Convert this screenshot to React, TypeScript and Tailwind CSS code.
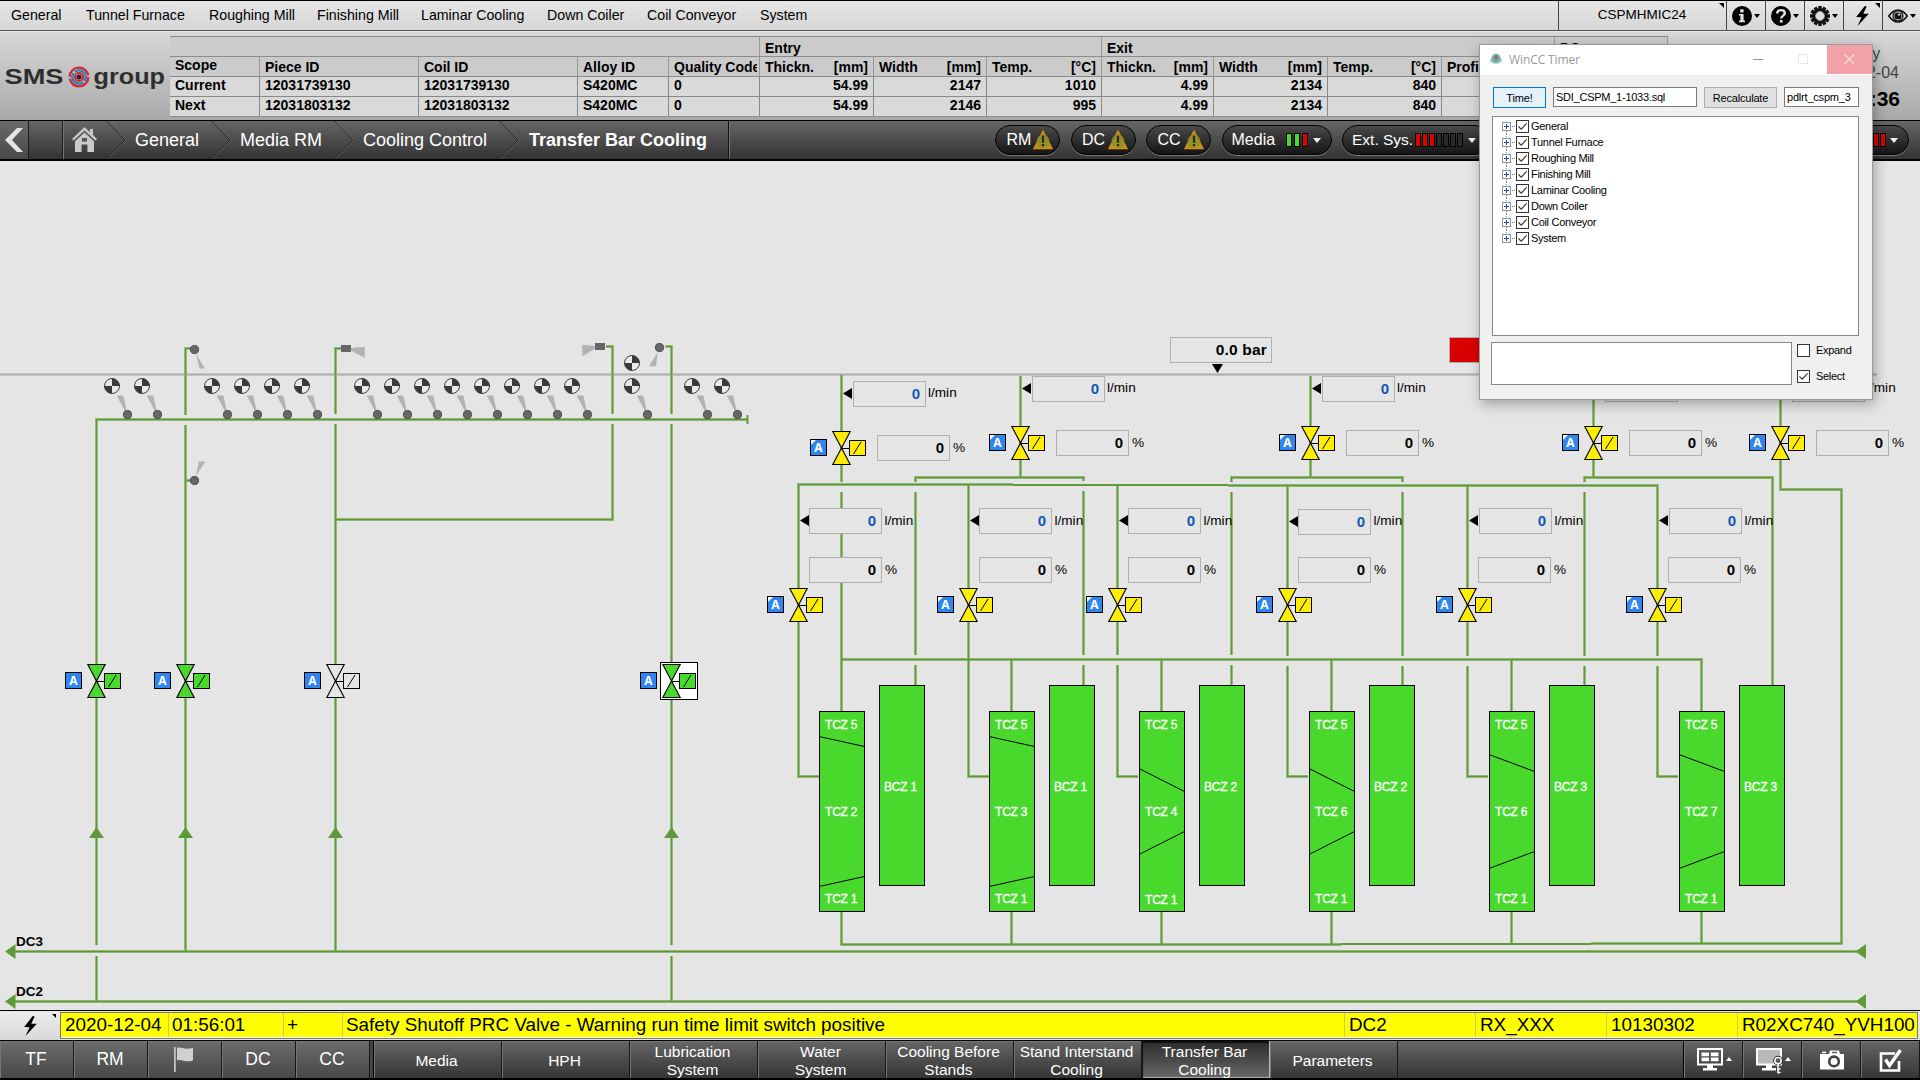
import React from "react";

const SANS = "font-['Liberation_Sans',Arial,sans-serif]";

/* ---------- top menu ---------- */

const menu: [string, string][] = [
  ["General", "w-[75px]"],
  ["Tunnel Furnace", "w-[123px]"],
  ["Roughing Mill", "w-[108px]"],
  ["Finishing Mill", "w-[104px]"],
  ["Laminar Cooling", "w-[126px]"],
  ["Down Coiler", "w-[100px]"],
  ["Coil Conveyor", "w-[113px]"],
  ["System", "w-[80px]"],
];

const Bolt = ({ className = "" }: { className?: string }) => (
  <svg className={className} width="16" height="22" viewBox="0 0 16 22">
    <path d="M10.5 0 L1 12 L7 12.3 L2.5 22 L15 8.6 L8.8 8.4 L12.6 0.6 Z" fill="#000" />
  </svg>
);

const SmallDown = () => (
  <svg width="6" height="4" viewBox="0 0 6 4" className="shrink-0">
    <path d="M0 0H6L3 4Z" fill="#000" />
  </svg>
);

const Corner = () => (
  <svg width="5" height="5" viewBox="0 0 5 5" className="absolute right-[2px] top-[2px]">
    <path d="M0 0H5V5Z" fill="#000" />
  </svg>
);

const InfoIcon = () => (
  <svg width="20" height="20" viewBox="0 0 20 20">
    <circle cx="10" cy="10" r="10" fill="#000" />
    <rect x="8.2" y="3.3" width="3.4" height="3.2" fill="#e2e2e2" />
    <path d="M7 8H11.6V14.6H13V16.2H7V14.6H8.4V9.6H7Z" fill="#e2e2e2" />
  </svg>
);

const HelpIcon = () => (
  <svg width="20" height="20" viewBox="0 0 20 20">
    <circle cx="10" cy="10" r="10" fill="#000" />
    <path d="M6.2 7.6C6.2 5 8 4.1 10 4.1S13.8 5.2 13.8 7.3C13.8 9.6 10.2 9.7 10.2 12.6" fill="none" stroke="#e2e2e2" strokeWidth="2.4" />
    <rect x="8.9" y="14" width="2.7" height="2.6" fill="#e2e2e2" />
  </svg>
);

const GearIcon = () => (
  <svg width="20" height="20" viewBox="0 0 20 20">
    {[0, 30, 60, 90, 120, 150].map((a) => (
      <rect key={a} x="8.3" y="0" width="3.4" height="20" fill="#111" transform={`rotate(${a} 10 10)`} />
    ))}
    <circle cx="10" cy="10" r="7.8" fill="#111" />
    <circle cx="10" cy="10" r="4.4" fill="#e0e0e0" />
    <circle cx="10" cy="10" r="4.6" fill="none" stroke="#888" strokeWidth="1" />
  </svg>
);

const EyeIcon = () => (
  <svg width="20" height="16" viewBox="0 0 20 16">
    <path d="M0.8 8C4 3.4 7 2 10 2S16 3.4 19.2 8C16 12.6 13 14 10 14S4 12.6 0.8 8Z" fill="none" stroke="#111" strokeWidth="1.6" />
    <circle cx="10" cy="8" r="5" fill="none" stroke="#111" strokeWidth="1.2" />
    <circle cx="10" cy="8" r="3.6" fill="#111" />
    <circle cx="11" cy="6.6" r="1.2" fill="#ccc" />
  </svg>
);

const TopBar = () => (
  <div className="flex h-[31px] shrink-0 border-t border-black border-b border-b-[#555] bg-linear-to-b from-[#e6e6e6] to-[#d6d6d6] pl-[11px]">
    {menu.map(([t, w]) => (
      <div key={t} className={`${w} shrink-0 whitespace-nowrap pt-[1px] text-[14.2px] leading-[27px]`}>{t}</div>
    ))}
    <div className="ml-auto flex w-[362px] shrink-0">
      <div className="relative w-[168px] border-l border-[#444] pr-[1px] text-center text-[13.5px] leading-[28px]">
        CSPMHMIC24
        <Corner />
      </div>
      <div className="flex w-[39px] items-center gap-[2px] border-l border-[#444] pl-[4.5px]"><InfoIcon /><SmallDown /></div>
      <div className="flex w-[39px] items-center gap-[2px] border-l border-[#444] pl-[5px]"><HelpIcon /><SmallDown /></div>
      <div className="flex w-[39px] items-center gap-[2px] border-l border-[#444] pl-[5px]"><GearIcon /><SmallDown /></div>
      <div className="relative flex w-[39px] items-center justify-center border-l border-[#444] pr-[2px]"><Bolt className="h-[20px] w-[15px]" /><Corner /></div>
      <div className="flex w-[38px] items-center gap-[2px] border-l border-[#444] pl-[4.5px]"><EyeIcon /><SmallDown /></div>
    </div>
  </div>
);

/* ---------- header with strip data ---------- */

const Logo = () => (
  <svg width="170" height="40" viewBox="0 0 170 40" className="mt-[25px] shrink-0" fontFamily="Liberation Sans, Arial, sans-serif" fontWeight="bold" fill="#2e2e30">
    <text x="4.5" y="26.5" fontSize="21.5" textLength="59" lengthAdjust="spacingAndGlyphs">SMS</text>
    <g fill="none">
      <circle cx="79" cy="20" r="9.4" stroke="#d22630" strokeWidth="2.3" strokeDasharray="27.5 2" />
      <circle cx="79" cy="20" r="6.6" stroke="#2c7fb8" strokeWidth="2.4" strokeDasharray="19 1.7" transform="rotate(50 79 20)" />
      <circle cx="79" cy="20" r="4.1" stroke="#d22630" strokeWidth="2" />
    </g>
    <circle cx="79" cy="20" r="2.6" fill="#3a2024" />
    <text x="93.5" y="26.5" fontSize="21.5" textLength="71.5" lengthAdjust="spacingAndGlyphs">group</text>
  </svg>
);

const cols = "grid-cols-[90px_159px_159px_91px_91px_114px_113px_115px_112px_114px_114px_113px_114px]";

const heads: [string, string][] = [
  ["Scope", ""], ["Piece ID", ""], ["Coil ID", ""], ["Alloy ID", ""], ["Quality Code", ""],
  ["Thickn.", "[mm]"], ["Width", "[mm]"], ["Temp.", "[°C]"],
  ["Thickn.", "[mm]"], ["Width", "[mm]"], ["Temp.", "[°C]"],
  ["Profile", ""], ["", ""],
];

const rows = [
  ["Current", "12031739130", "12031739130", "S420MC", "0", "54.99", "2147", "1010", "4.99", "2134", "840", "", ""],
  ["Next", "12031803132", "12031803132", "S420MC", "0", "54.99", "2146", "995", "4.99", "2134", "840", "", ""],
];

const StripTable = () => (
  <div className="mt-[4px] h-[80px] w-[1498px] shrink-0 border-t border-[#888] text-[14px] font-bold leading-[19px]">
    <div className="flex h-[20px] border-b border-[#8c8c8c] bg-[#cbcbcb]">
      <div className="w-[590px] border-r border-[#999]" />
      <div className="w-[342px] border-r border-[#999] pl-[5px] pt-[2px]">Entry</div>
      <div className="w-[453px] border-r border-[#999] pl-[5px] pt-[2px]">Exit</div>
      <div className="w-[113px] border-r border-[#999] pl-[5px] pt-[2px]">DC</div>
    </div>
    <div className={`grid h-[20px] border-b border-[#888] bg-[#cbcbcb] ${cols}`}>
      {heads.map(([a, b], i) => (
        <div key={i} className={`flex justify-between overflow-hidden whitespace-nowrap border-r border-[#999] pl-[5px] ${i === 4 ? "pr-[2px]" : "pr-[5px]"} ${i === 0 ? "leading-[17px]" : "pt-[1px]"}`}>
          <span className="overflow-hidden">{a}</span>
          <span>{b}</span>
        </div>
      ))}
    </div>
    {rows.map((r, k) => (
      <div key={k} className={`grid h-[20px] border-b border-[#888] bg-[#d9d9d9] ${cols}`}>
        {r.map((v, i) => (
          <div key={i} className={`border-r border-[#888] px-[5px] leading-[17px] ${i > 4 ? "text-right" : ""}`}>{v}</div>
        ))}
      </div>
    ))}
  </div>
);

const Header = () => (
  <div className="flex h-[89px] shrink-0 border-t border-[#e6e6e6] bg-linear-to-b from-[#d8d8d8] to-[#a9a9a9]">
    <Logo />
    <StripTable />
    <div className="ml-auto flex w-[124px] flex-col items-center text-[16px] text-[#444]">
      <div className="mt-[12px] leading-[20px]">Friday</div>
      <div className="leading-[18px]">2020-12-04</div>
      <div className="mt-[5px] text-[21px] font-bold leading-[24px] text-black">01:56:36</div>
    </div>
  </div>
);

/* ---------- breadcrumb bar ---------- */

const Chevron = () => (
  <svg width="20" height="38" viewBox="0 0 20 38" className="shrink-0">
    <path d="M0.5 0L19 19L0.5 38" fill="none" stroke="#242424" strokeWidth="1" />
    <path d="M1.5 0L20 19L1.5 38" fill="none" stroke="#707070" strokeWidth="0.7" />
  </svg>
);

const Warning = () => (
  <svg width="20" height="20" viewBox="0 0 20 20" className="shrink-0">
    <path d="M10 1L19 18.5H1Z" fill="#a29a1c" stroke="#d98a1a" strokeWidth="1.4" />
    <circle cx="10" cy="11" r="6.4" fill="#8d8a2a" opacity=".75" />
    <path d="M10 5.6V12.8" stroke="#2b2b10" strokeWidth="2.2" />
    <rect x="8.9" y="14" width="2.2" height="2.2" fill="#2b2b10" />
  </svg>
);

const Bars = ({ colors, gap = "gap-px" }: { colors: string[]; gap?: string }) => (
  <div className={`flex ${gap}`}>
    {colors.map((c, i) => (
      <div key={i} className={`h-[14px] w-[6px] border border-black ${c}`} />
    ))}
  </div>
);

const WhiteDown = () => (
  <svg width="8" height="5" viewBox="0 0 8 5"><path d="M0 0H8L4 5Z" fill="#eee" /></svg>
);

const pill = "flex h-[30px] items-center rounded-full border border-black bg-linear-to-b from-[#4a4a4a] to-[#161616] text-[16px] leading-[18px] text-white shadow-[0_1px_0_#777]";

const R = "bg-[#dd0000]";
const G = "bg-[#48d92c]";
const E = "bg-[#2a2a2a]";

const NavBar = () => (
  <div className="flex h-[41px] shrink-0 border-y border-b-2 border-black bg-linear-to-b from-[#666] to-[#343434] text-[18px] text-white">
    <div className="flex w-[29px] items-center border-r border-[#1c1c1c] bg-linear-to-b from-[#6a6a6a] to-[#484848] pl-[4px]">
      <svg width="20" height="26" viewBox="0 0 20 26"><path d="M19 1L8 13L19 25H13L1 13L13 1Z" fill="#e4e4e4" /></svg>
    </div>
    <div className="w-[34px] border-r border-[#1c1c1c] shadow-[1px_0_0_#777]" />
    <div className="flex w-[43px] items-center pl-[9px]">
      <svg width="25" height="26" viewBox="0 0 25 26" fill="#c9c9c9">
        <path d="M12.5 0L0 12L1.6 13.6L12.5 3.4L23.4 13.6L25 12L21 8V2H18V5.2Z" />
        <path d="M12.5 5.4L3 14.2V25H9.6V17.5H15.4V25H22V14.2Z" />
        <rect x="10" y="11" width="5" height="3.6" fill="#555" />
      </svg>
    </div>
    <Chevron />
    <div className="w-[85px] pl-[9px] leading-[39px]">General</div>
    <Chevron />
    <div className="w-[103px] pl-[9px] leading-[39px]">Media RM</div>
    <Chevron />
    <div className="w-[145px] whitespace-nowrap pl-[9px] leading-[39px]">Cooling Control</div>
    <Chevron />
    <div className="w-[210px] whitespace-nowrap border-r border-[#111] pl-[10px] font-bold leading-[39px] shadow-[1px_0_0_#777]">Transfer Bar Cooling</div>
    <div className="ml-[266px] flex items-center gap-[10.5px]">
      {["RM", "DC", "CC"].map((t) => (
        <div key={t} className={`${pill} w-[65px] justify-between pl-[10.5px] pr-[6.5px]`}>{t}<Warning /></div>
      ))}
      <div className={`${pill} w-[110px] pl-[9px]`}>
        <span className="w-[54px]">Media</span><Bars colors={[G, G, R]} gap="gap-[2px]" /><span className="ml-[5px]"><WhiteDown /></span>
      </div>
      <div className={`${pill} w-[148px] gap-[5px] pl-[9px]`}>
        <span className="w-[58px] whitespace-nowrap text-[15.5px]">Ext. Sys.</span><Bars colors={[R, R, R, E, E, E, E]} /><WhiteDown />
      </div>
      <div className={`${pill} ml-[236px] w-[172px] justify-end gap-[4px] pr-[10px]`}>
        <Bars colors={[R, R, R, R, R, R]} /><WhiteDown />
      </div>
    </div>
  </div>
);

/* ---------- process diagram ---------- */

const OY = 161;

const pipes = [
  "M96.5 945V419.5H747.5",
  "M96.5 956V1001.5",
  "M191 348.5H185.5V415",
  "M185.5 425V951.5",
  "M185.5 480.5H191",
  "M341 348.5H335.5V414",
  "M335.5 424V951.5",
  "M335.5 519.5H612.5V424",
  "M612.5 414V346.5H606",
  "M665.5 346.5H671.5V414",
  "M671.5 424V945",
  "M671.5 956V1001.5",
  "M15 951.5H1857",
  "M15 1001.5H1857",
  "M841.5 375V482",
  "M841.5 492V711",
  "M1013 484.5H798.5V776.5H819",
  "M1228 485.5H1657.5V656",
  "M968.5 485V776.5H989",
  "M1117.5 485V655",
  "M1117.5 665V776.5H1138",
  "M1287.5 486V656",
  "M1287.5 666V776.5H1308",
  "M1467.5 486V656",
  "M1467.5 666V776.5H1488",
  "M1657.5 666V776.5H1678",
  "M1020.5 376V477.5",
  "M915.5 482V477.5H1083.5V481",
  "M915.5 492V655",
  "M915.5 665V685",
  "M1083.5 491V655",
  "M1083.5 665V685",
  "M1310.5 376V477.5",
  "M1231.5 482V477.5H1402.5V482",
  "M1231.5 492V655",
  "M1231.5 665V685",
  "M1402.5 492V656",
  "M1402.5 666V685",
  "M1593.5 376V477.5",
  "M1584.5 482V477.5H1772.5V685",
  "M1584.5 492V656",
  "M1584.5 666V685",
  "M1780.5 376V489.5H1841.5V943.5H1591",
  "M841.5 659.5H1701.5V711",
  "M1011.5 659.5V711",
  "M1161.5 659.5V711",
  "M1331.5 659.5V711",
  "M1511.5 659.5V711",
  "M841.5 912V944.5H1341",
  "M1011.5 912V944",
  "M1161.5 912V944",
  "M1331.5 912V944",
  "M1511.5 912V944",
  "M1701.5 912V944",
].join("");

const gauges = [112, 142, 212, 242, 272, 302, 362, 392, 422, 452, 482, 512, 542, 572, 632, 692, 722];

const Gauge = ({ x, y }: { x: number; y: number }) => (
  <g transform={`translate(${x} ${y})`}>
    <circle r="7.5" fill="#eaeaea" />
    <path d="M0 0V-7.5A7.5 7.5 0 0 1 7.5 0ZM0 0V7.5A7.5 7.5 0 0 1 -7.5 0Z" fill="#3a3a3a" />
    <circle r="7.5" fill="none" stroke="#3a3a3a" strokeWidth="1" />
  </g>
);

const Dot = ({ x, y }: { x: number; y: number }) => (
  <circle cx={x} cy={y} r="4.1" fill="#666" stroke="#474747" strokeWidth="0.9" />
);

const GREEN = "#48d92c";
const YELLOW = "#ffee00";

const Valve = ({ x, y, fill, corner }: { x: number; y: number; fill: string; corner?: boolean }) => (
  <g transform={`translate(${x} ${y})`} stroke="#000">
    <path d="M-8.7 -16.5H8.7L-8.7 16.5H8.7Z" fill={fill} strokeWidth="1.1" />
    <path d="M0 .5H8" strokeWidth="1" />
    <rect x="8" y="-7.5" width="16" height="15" fill={fill} />
    <path d="M12 6L19.5 -6" strokeWidth="1" />
    <rect x="-31" y="-8.5" width="16" height="16" fill="#2f86ee" />
    {corner && <path d="M-30.5 -8V-3L-25.5 -8Z" fill="#fff" stroke="none" />}
    <text x="-23" y="4.2" fontSize="12" fontWeight="bold" fill="#fff" stroke="none" textAnchor="middle" fontFamily="Open Sans, sans-serif">A</text>
  </g>
);

const valves: { x: number; y: number; fill: string; corner?: boolean }[] = [
  { x: 96.5, y: 681, fill: GREEN },
  { x: 185.5, y: 681, fill: GREEN },
  { x: 335.5, y: 681, fill: "#e5e5e5" },
  { x: 671.5, y: 681, fill: GREEN },
  { x: 841.5, y: 448, fill: YELLOW, corner: true },
  { x: 1020.5, y: 443, fill: YELLOW, corner: true },
  { x: 1310.5, y: 443, fill: YELLOW, corner: true },
  { x: 1593.5, y: 443, fill: YELLOW, corner: true },
  { x: 1780.5, y: 443, fill: YELLOW, corner: true },
  ...[798.5, 968.5, 1117.5, 1287.5, 1467.5, 1657.5].map((x) => ({ x, y: 605, fill: YELLOW, corner: true })),
];

const zones = [
  { x: 819, mid: "TCZ 2", bcz: "BCZ 1", d: [736.5, 746.5, 886.5, 876.5], low: 903 },
  { x: 989, mid: "TCZ 3", bcz: "BCZ 1", d: [736.5, 746.5, 886.5, 876.5], low: 903 },
  { x: 1139, mid: "TCZ 4", bcz: "BCZ 2", d: [768.5, 791.5, 854.5, 831.5], low: 904 },
  { x: 1309, mid: "TCZ 6", bcz: "BCZ 2", d: [768.5, 791.5, 854.5, 831.5], low: 903 },
  { x: 1489, mid: "TCZ 6", bcz: "BCZ 3", d: [754.5, 771.5, 868.5, 851.5], low: 903 },
  { x: 1679, mid: "TCZ 7", bcz: "BCZ 3", d: [754.5, 771.5, 868.5, 851.5], low: 903 },
];

/* value fields: left, top, unit offset, unit text */
type Field = { x: number; y: number; u: string; ux: number; uy?: number };
const fields: Field[] = [
  { x: 853, y: 381, u: "l/min", ux: 75 },
  ...[1032, 1322, 1605, 1792].map((x) => ({ x, y: 376, u: "l/min", ux: 75 })),
  { x: 877, y: 435, u: "%", ux: 76 },
  ...[1056, 1346, 1629, 1816].map((x) => ({ x, y: 430, u: "%", ux: 76 })),
  ...[809, 979, 1128, 1479, 1669].map((x) => ({ x, y: 508, u: "l/min", ux: 75.5 })),
  { x: 1298, y: 509, u: "l/min", ux: 75.5, uy: -1 },
  ...[809, 979, 1128, 1298, 1478, 1668].map((x) => ({ x, y: 557, u: "%", ux: 76 })),
];

const flowArrows: [number, number][] = [
  [843, 393.5],
  ...[1022, 1312, 1595, 1782].map((x): [number, number] => [x, 388.5]),
  ...[800, 970, 1119, 1469, 1659].map((x): [number, number] => [x, 520.5]),
  [1289, 521.5],
];

const Diagram = () => (
  <div className="relative h-[849px] shrink-0 overflow-hidden bg-[#e5e5e5]">
    <svg width="1920" height="849" viewBox="0 161 1920 849" className="absolute left-0 top-0" fontFamily="Liberation Sans, Arial, sans-serif">
      <path d="M0 374.5H1877" stroke="#c6c6c6" strokeWidth="3" />
      <path d="M0 374.5H1877" stroke="#adadad" strokeWidth="1" />
      <g fill="none">
        <path d={pipes} stroke="#9cc183" strokeWidth="3" />
        <path d={pipes} stroke="#5f9a3a" strokeWidth="1.3" />
        <path d="M1013 485H1228M1341 944H1591M747.5 415V424" stroke="#5f9a3a" strokeWidth="2" />
      </g>
      <g fill="#5f9a3a">
        <path d="M5 951.5L15.5 944V959ZM5 1001.5L15.5 994V1009ZM1855.5 951.5L1866 944V959ZM1855.5 1001.5L1866 994V1009Z" />
        {[96.5, 185.5, 335.5, 671.5].map((x) => (
          <path key={x} d={`M${x - 7.5} 838L${x} 827L${x + 7.5} 838Z`} />
        ))}
      </g>

      {gauges.map((x) => (
        <g key={x}>
          <path d={`M${x + 4.7} 395.5H${x + 11.3}L${x + 14.6} 410.5H${x + 12.6}Z`} fill="#b2b2b2" />
          <Dot x={x + 15.5} y={414.5} />
          <Gauge x={x} y={386} />
        </g>
      ))}
      <Gauge x={632} y={363} />
      <g fill="#b2b2b2">
        <path d="M196 354L199.5 368.5H205ZM196 476L198.7 461.5H205.3ZM657.7 352L649 366.3H656Z" />
        <path d="M351 348L364.7 346.7V358L351 350.5ZM595 346L582.3 344.7V356.3L595 348.7Z" />
      </g>
      <Dot x={194.5} y={349.5} />
      <Dot x={194.5} y={480.5} />
      <Dot x={659.5} y={347.5} />
      <rect x="341" y="345" width="10" height="7" fill="#666" />
      <rect x="595" y="343" width="10" height="7" fill="#666" />

      <rect x="660.5" y="662.5" width="37" height="37" fill="#fff" stroke="#000" />
      {valves.map((v) => (
        <Valve key={`${v.x}-${v.y}`} {...v} />
      ))}

      {zones.map((z) => (
        <g key={z.x}>
          <g fill={GREEN} stroke="#000">
            <rect x={z.x + 0.5} y="711.5" width="45" height="200" />
            <rect x={z.x + 60.5} y="685.5" width="45" height="200" />
            <path d={`M${z.x} ${z.d[0]}L${z.x + 45.5} ${z.d[1]}M${z.x} ${z.d[2]}L${z.x + 45.5} ${z.d[3]}`} fill="none" />
          </g>
          <g fill="#fff" fontSize="12" letterSpacing="-0.2" stroke="#fff" strokeWidth="0.3">
            <text x={z.x + 6} y="729">TCZ 5</text>
            <text x={z.x + 6} y="816">{z.mid}</text>
            <text x={z.x + 6} y={z.low}>TCZ 1</text>
            <text x={z.x + 65} y="791">{z.bcz}</text>
          </g>
        </g>
      ))}

      <path d="M1212 364H1223L1217.5 373Z" fill="#000" />
      <g fontSize="13.5" fontWeight="bold">
        <text x="16" y="945.5">DC3</text>
        <text x="16" y="995.5">DC2</text>
      </g>
    </svg>

    <div className="absolute left-[1170px] top-[176px] h-[26px] w-[102px] border border-[#b0b0b0] bg-[#e5e5e5] pr-[4px] text-right text-[15.5px] font-bold leading-[24px] tracking-[0.2px]">0.0 bar</div>
    <div className="absolute left-[1449px] top-[176px] h-[26px] w-[102px] border border-[#b0b0b0] bg-[#d90000]" />

    {fields.map((f, i) => (
      <div key={i} className="absolute" style={{ left: f.x, top: f.y - OY }}>
        <div className={`h-[26px] w-[73px] border border-[#b0b0b0] bg-[#e5e5e5] pr-[5px] text-right text-[15px] font-bold leading-[24px] ${f.u === "%" ? "" : "text-[#1058b8]"}`}>0</div>
        <div className="absolute top-0 text-[13.6px] leading-[26px]" style={{ left: f.ux, top: (f.uy ?? 0) - (f.u === "%" || f.ux === 75.5 ? 0 : 1) }}>{f.u}</div>
      </div>
    ))}
    <svg width="1920" height="849" viewBox="0 161 1920 849" className="absolute left-0 top-0">
      {flowArrows.map(([x, y]) => (
        <path key={x} d={`M${x} ${y}L${x + 9} ${y - 5.5}V${y + 5.5}Z`} fill="#000" />
      ))}
    </svg>
  </div>
);

/* ---------- alarm line ---------- */

const AlarmBar = () => (
  <div className="flex h-[30px] shrink-0 border-t border-black bg-[#e4e4e4] pt-px text-[18.85px] leading-[23px]">
    <div className="relative flex w-[60px] items-center justify-center bg-linear-to-b from-[#ececec] to-[#d8d8d8]">
      <Bolt className="h-[20px] w-[15px]" />
      <svg width="4" height="4" viewBox="0 0 4 4" className="absolute right-[4px] top-[2px]"><path d="M0 0H4V4Z" /></svg>
    </div>
    <div className="h-[27px] w-[1858px] border border-[#777] bg-white">
      <div className="flex h-[24px] overflow-hidden whitespace-nowrap bg-[#ffff00]">
        <div className="w-[108px] shrink-0 border-r border-[#c8c860] pl-[4px]">2020-12-04</div>
        <div className="w-[115px] shrink-0 border-r border-[#c8c860] pl-[3px]">01:56:01</div>
        <div className="w-[59px] shrink-0 border-r border-[#c8c860] pl-[3px]">+</div>
        <div className="w-[1002px] shrink-0 border-r border-[#c8c860] pl-[3px]">Safety Shutoff PRC Valve - Warning run time limit switch positive</div>
        <div className="w-[131px] shrink-0 border-r border-[#c8c860] pl-[4px]">DC2</div>
        <div className="w-[131px] shrink-0 border-r border-[#c8c860] pl-[4px]">RX_XXX</div>
        <div className="w-[131px] shrink-0 border-r border-[#c8c860] pl-[4px]">10130302</div>
        <div className="pl-[4px]">R02XC740_YVH100</div>
      </div>
    </div>
  </div>
);

/* ---------- bottom navigation ---------- */

const cell = "flex h-full shrink-0 items-center justify-center border-r border-[#161616] shadow-[inset_1px_1px_0_#777]";

const Up = () => (
  <svg width="6" height="4" viewBox="0 0 6 4" className="mb-px"><path d="M0 4H6L3 0Z" fill="#fff" /></svg>
);

const tabs = [
  ["Media"], ["HPH"], ["Lubrication", "System"], ["Water", "System"], ["Cooling Before", "Stands"],
  ["Stand Interstand", "Cooling"], ["Transfer Bar", "Cooling"], ["Parameters"],
];

const BottomNav = () => (
  <div className="flex h-[40px] shrink-0 border-t border-b-2 border-black bg-linear-to-b from-[#666] to-[#353535] text-white">
    {["TF", "RM", "", "DC", "CC"].map((t, i) => (
      <div key={i} className={`${cell} w-[74px] bg-linear-to-b from-[#6c6c6c] to-[#484848] pr-[1px] text-[17.5px]`}>
        {t || (
          <svg width="20" height="25" viewBox="0 0 20 25">
            <path d="M0.9 0V25" stroke="#cfcfcf" strokeWidth="1.6" />
            <path d="M3 1C7 -0.6 10 3.4 19 0.8V13.4C11 16 8 11.4 3 13.4Z" fill="#cfcfcf" />
          </svg>
        )}
      </div>
    ))}
    <div className="w-[4px] shrink-0 border-r border-black bg-[#444]" />
    {tabs.map((t) => {
      const active = t[0] === "Transfer Bar";
      return (
        <div key={t[0]} className={`flex h-full w-[128px] shrink-0 flex-col items-center justify-center border-r pr-[2px] pt-[2px] text-[15.5px] leading-[18px] ${active ? "border-[#bbb] bg-linear-to-b from-[#2c2c2c] to-[#686868] shadow-[inset_1px_2px_1px_#111,inset_0_-1px_0_#aaa]" : "border-[#161616] shadow-[inset_1px_1px_0_#777]"}`}>
          {t.map((l) => (
            <div key={l} className="whitespace-nowrap">{l}</div>
          ))}
        </div>
      );
    })}
    <div className="ml-auto flex h-full">
      <div className="w-px bg-black" />
      <div className={`${cell} w-[59px] gap-[3px] pl-[3px]`}>
        <svg width="26" height="23" viewBox="0 0 26 23">
          <rect x="1" y="1" width="24" height="15.5" fill="none" stroke="#fff" strokeWidth="2" />
          <path d="M4.5 4.5H12V8.2H4.5ZM13.8 4.5H21.5V8.2H13.8ZM4.5 9.6H12V13.3H4.5ZM13.8 9.6H21.5V13.3H13.8Z" fill="#fff" />
          <path d="M10 17H16V20H20V22.5H6V20H10Z" fill="#fff" />
        </svg>
        <Up />
      </div>
      <div className={`${cell} w-[59px] gap-[1px] pl-[3px]`}>
        <svg width="28" height="26" viewBox="0 0 28 26" className="mt-[2px]">
          <rect x="1" y="1" width="24" height="15.5" fill="#b9b9b9" stroke="#fff" strokeWidth="2" />
          <path d="M10 17H16V20H20V22.5H6V20H10Z" fill="#fff" />
          <circle cx="22" cy="12.6" r="3.4" fill="#555" stroke="#222" strokeWidth="2.8" />
          <circle cx="22" cy="12.6" r="3.2" fill="#555" stroke="#fff" strokeWidth="1.5" />
          <path d="M22 16V25.5M22 21H24.6M22 24.5H24.6" stroke="#fff" strokeWidth="1.6" />
        </svg>
        <Up />
      </div>
      <div className={`${cell} w-[59px] pl-[2px]`}>
        <svg width="24" height="20" viewBox="0 0 24 20">
          <path d="M0 4H9L10 0.5H19L20 4H24V19.5H0Z" fill="#fff" />
          <rect x="2" y="1.6" width="4" height="1.6" fill="#fff" />
          <rect x="12" y="1.8" width="5" height="1.4" fill="#555" />
          <circle cx="14" cy="11.4" r="4.8" fill="#fff" stroke="#444" strokeWidth="2.6" />
        </svg>
      </div>
      <div className={`${cell} w-[59px] pl-[2px]`}>
        <svg width="24" height="24" viewBox="0 0 24 24" fill="none" stroke="#fff">
          <path d="M16 5.5H2V22.5H20V13" strokeWidth="2.6" />
          <path d="M6.5 11.5L10.5 17.5L21.5 2" strokeWidth="3.4" />
        </svg>
      </div>
    </div>
  </div>
);

/* ---------- timer window ---------- */

const Check = ({ on = true }: { on?: boolean }) => (
  <svg width="13" height="13" viewBox="0 0 13 13" className="shrink-0">
    <rect x="0.5" y="0.5" width="12" height="12" fill="#fff" stroke="#333" />
    {on && <path d="M2.4 6.4L5.2 9.2L10.6 3.4" fill="none" stroke="#333" strokeWidth="1.2" />}
  </svg>
);

const tree = ["General", "Tunnel Furnace", "Roughing Mill", "Finishing Mill", "Laminar Cooling", "Down Coiler", "Coil Conveyor", "System"];

const TimerWindow = () => (
  <div className="absolute left-[1479px] top-[44px] h-[356px] w-[394px] border border-[#9a9a9a] bg-[#f0f0f0] text-[11px] tracking-[-0.3px] text-black shadow-[2px_4px_12px_rgba(0,0,0,0.3)]">
    <div className="flex h-[30px] bg-white">
      <svg width="14" height="14" viewBox="0 0 14 14" className="ml-[9px] mt-[7px]">
        <ellipse cx="7" cy="8.6" rx="6.4" ry="3.4" fill="#bcd8d4" />
        <circle cx="7" cy="6.4" r="4.6" fill="#66b3ae" />
        <path d="M5 4.5L8.5 3.6L9 7L6 8Z" fill="#b0655e" />
      </svg>
      <div className="ml-[6px] font-['Open_Sans',sans-serif] text-[12px] leading-[30px] tracking-[-0.1px] text-[#999]">WinCC Timer</div>
      <div className="ml-auto flex">
        <svg width="91" height="29" viewBox="0 0 91 29" fill="none">
          <path d="M17 14.5H27" stroke="#999" />
          <rect x="62.5" y="9.5" width="9" height="9" stroke="#e6e6e6" />
        </svg>
        <svg width="45" height="29" viewBox="0 0 45 29" className="bg-[#f4a1a8]">
          <path d="M17.5 9.5L27 19M27 9.5L17.5 19" stroke="#fbdcde" strokeWidth="1.1" />
        </svg>
      </div>
    </div>
    <div className="mt-[12px] flex gap-[7px] pl-[13px] leading-[19px]">
      <div className="h-[21px] w-[53px] border border-[#0078d7] bg-[#e5f1fb] text-center leading-[20px] tracking-[-0.1px]">Time!</div>
      <div className="h-[20px] w-[144px] border border-[#7a7a7a] bg-white pl-[2px] leading-[18px] tracking-[-0.25px]">SDI_CSPM_1-1033.sql</div>
      <div className="h-[21px] w-[73px] border border-[#adadad] bg-[#e1e1e1] text-center leading-[20px] tracking-[-0.2px]">Recalculate</div>
      <div className="h-[20px] w-[75px] border border-[#7a7a7a] bg-white pl-[2px] leading-[18px] tracking-[-0.2px]">pdlrt_cspm_3</div>
    </div>
    <div className="ml-[12px] mt-[8px] h-[220px] w-[367px] border border-[#828790] bg-white pl-[9px] pt-px">
      {tree.map((t, i) => (
        <div key={t} className="flex h-[16px] items-center">
          <svg width="14" height="16" viewBox="0 0 14 16" className="shrink-0">
            {i > 0 && <path d="M4.5 0V4" stroke="#888" strokeDasharray="1 1" />}
            {i < 7 && <path d="M4.5 13V16" stroke="#888" strokeDasharray="1 1" />}
            <path d="M10 8.5H14" stroke="#888" strokeDasharray="1 1" />
            <rect x="0.5" y="4.5" width="8" height="8" fill="#fafafa" stroke="#919191" />
            <path d="M2 8.5H7M4.5 6V11" stroke="#2b4a9c" />
          </svg>
          <Check />
          <span className="ml-[2px] whitespace-nowrap leading-[15px]">{t}</span>
        </div>
      ))}
    </div>
    <div className="ml-[11px] mt-[6px] flex">
      <div className="h-[43px] w-[301px] border border-[#828790] bg-white" />
      <div className="ml-[5px] flex flex-col gap-[10px]">
        <div className="flex h-[16px] items-center gap-[6px]"><Check on={false} />Expand</div>
        <div className="flex h-[16px] items-center gap-[6px]"><Check />Select</div>
      </div>
    </div>
  </div>
);

export default function App() {
  return (
    <div className={`relative flex h-[1080px] w-[1920px] flex-col overflow-hidden bg-[#e5e5e5] text-black ${SANS}`}>
      <TopBar />
      <Header />
      <NavBar />
      <Diagram />
      <AlarmBar />
      <BottomNav />
      <TimerWindow />
    </div>
  );
}
